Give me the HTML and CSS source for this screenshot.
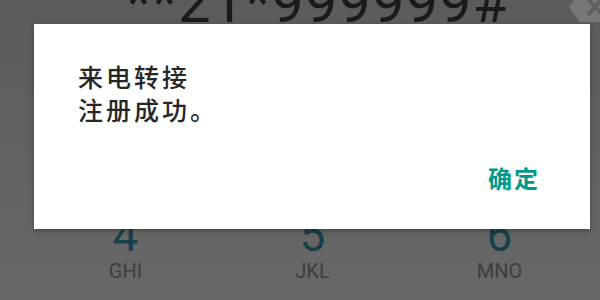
FILE: index.html
```html
<!DOCTYPE html>
<html lang="zh-CN">
<head>
    <meta name="viewport" content="width=device-width, initial-scale=1.0" />
    <title>拨号</title>
    <link rel="stylesheet" href="styles.css">
</head>
<body>
    <main class="dialer">
        <div class="display">
            <span class="number">**21*999999#</span>
            <svg class="backspace" width="44" height="34" viewBox="0 0 44 34">
                <path d="M12 2 H40 a3 3 0 0 1 3 3 V29 a3 3 0 0 1 -3 3 H12 L1 17 Z" fill="#777"/>
                <path d="M20 9 L34 25 M34 9 L20 25" stroke="#5f5f5f" stroke-width="3.5"/>
            </svg>
        </div>
        <!-- 1 2 3 行被对话框挡住 -->
        <div class="keypad">
            <div class="key"><span class="digit">4</span><span class="letters">GHI</span></div>
            <div class="key"><span class="digit">5</span><span class="letters">JKL</span></div>
            <div class="key"><span class="digit">6</span><span class="letters">MNO</span></div>
        </div>
    </main>

    <!-- 呼叫转移结果对话框 -->
    <div class="dialog">
        <p class="message">来电转接<br>注册成功。</p>
        <div class="actions">
            <button class="ok-button">确定</button>
        </div>
    </div>
</body>
</html>
```

FILE: styles.css
```css
body {
    margin: 0;
    width: 600px;
    height: 300px;
    overflow: hidden;
    background: linear-gradient(#5b5b5b, #686868);
    font-family: Roboto, "Noto Sans", sans-serif;
    position: relative;
}
.dialer {
    display: flex;
    flex-direction: column;
}
.display {
    height: 31px;
    overflow: hidden;
    display: flex;
    align-items: flex-end;
    justify-content: space-between;
    padding-left: 126px;
}
.number {
    font-size: 58px;
    font-weight: 400;
    line-height: 58px;
    color: #1a1a1a;
    letter-spacing: 1px;
}
.backspace {
    align-self: flex-start;
    margin-top: -10px;
    margin-right: -12px;
}
.keypad {
    display: grid;
    grid-template-columns: repeat(3, 187px);
    padding: 180px 0 0 32px;
}
.key {
    display: flex;
    flex-direction: column;
    align-items: center;
}
.digit {
    font-size: 46px;
    font-weight: 400;
    line-height: 48px;
    color: #17404a;
}
.letters {
    font-size: 20px;
    line-height: 20px;
    margin-top: 2px;
    color: #3e3e3e;
}

/* 对话框 */
.dialog {
    position: absolute;
    left: 34px;
    top: 24px;
    width: 556px;
    height: 205px;
    background-color: #fff;
    box-shadow: 0 2px 5px rgba(0, 0, 0, 0.3);
    box-sizing: border-box;
    padding: 36px 50px 0 44px;
    display: flex;
    flex-direction: column;
}
.message {
    margin: 0;
    font-family: "Noto Sans CJK SC", sans-serif;
    font-size: 25px;
    font-weight: 500;
    line-height: 32.5px;
    letter-spacing: 3px;
    color: #262626;
}
.actions {
    display: flex;
    justify-content: flex-end;
    margin-top: 37px;
}
.ok-button {
    background: transparent;
    border: none;
    padding: 0;
    font-family: "Noto Sans CJK SC", sans-serif;
    font-size: 24px;
    line-height: 32px;
    font-weight: bold;
    letter-spacing: 2px;
    color: #00998a;
}
```
